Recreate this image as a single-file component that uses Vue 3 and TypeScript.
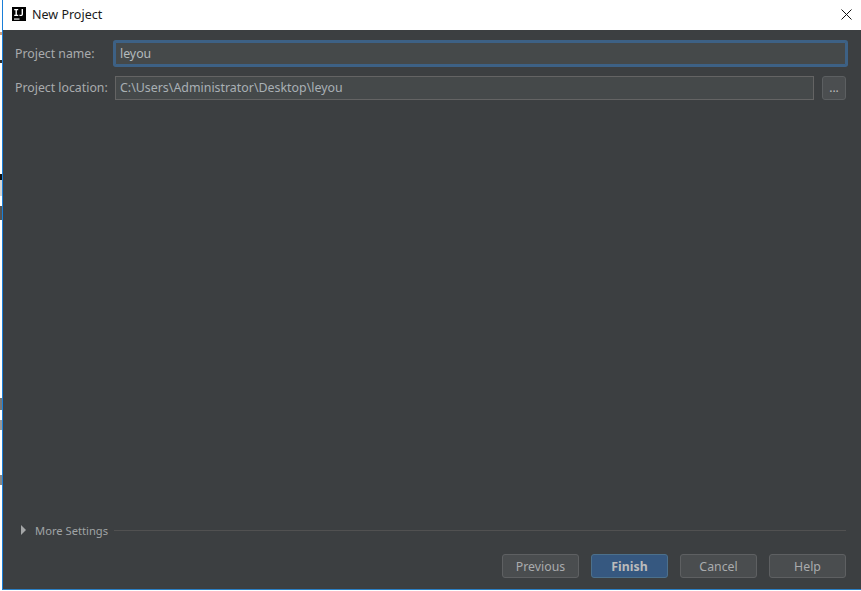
<script setup lang="ts">
const buttons: { label: string; primary?: boolean }[] = [
  { label: 'Previous' },
  { label: 'Finish', primary: true },
  { label: 'Cancel' },
  { label: 'Help' },
]
const backdrop: { top: number; height: number; color: string }[] = [
  { top: 32, height: 3, color: '#d0a080' },
  { top: 60, height: 3, color: '#30302e' },
  { top: 174, height: 6, color: '#111111' },
  { top: 180, height: 16, color: '#d6d6d6' },
  { top: 206, height: 14, color: '#555555' },
  { top: 398, height: 12, color: '#777777' },
  { top: 420, height: 10, color: '#999999' },
  { top: 475, height: 10, color: '#888888' },
]
</script>

<template>
  <div class="screen">
    <div class="backdrop">
      <i
        v-for="b in backdrop"
        :key="b.top"
        :style="{ top: b.top + 'px', height: b.height + 'px', background: b.color }"
      ></i>
    </div>
    <div class="window">
      <header class="titlebar">
        <svg class="logo" width="14" height="14" viewBox="0 0 14 14">
          <rect width="14" height="14" fill="#000" />
          <path d="M2.200 2h4v1.200H4.900v4.600h1.300V9h-4V7.800h1.300V3.200H2.200z" fill="#fff" />
          <path d="M9.600 2H11v5c0 1.400-.8 2.100-2.100 2.100-.7 0-1.300-.2-1.700-.6l.6-1c.3.300.7.400 1 .4.500 0 .8-.3.800-1z" fill="#fff" />
          <rect x="2" y="11.500" width="5.500" height="1.100" fill="#fff" />
        </svg>
        <span class="title">New Project</span>
        <svg class="close" width="11" height="11" viewBox="0 0 11 11">
          <path d="M.5.500l10 10M10.500.500l-10 10" stroke="#111" stroke-width="1" fill="none" />
        </svg>
      </header>
      <main class="body">
        <div class="form">
          <div class="row">
            <label class="label">Project name:</label>
            <div class="input focused">leyou</div>
          </div>
          <div class="row">
            <label class="label location">Project location:</label>
            <div class="input location-input">C:\Users\Administrator\Desktop\leyou</div>
            <button class="browse">...</button>
          </div>
        </div>
        <div class="more">
          <svg class="arrow" width="5" height="10" viewBox="0 0 5 10">
            <path d="M0 0l5 5-5 5z" fill="#a4a6a7" />
          </svg>
          <span class="more-text">More Settings</span>
          <span class="rule"></span>
        </div>
        <footer class="actions">
          <button
            v-for="b in buttons"
            :key="b.label"
            class="btn"
            :class="{ primary: b.primary }"
          >{{ b.label }}</button>
        </footer>
      </main>
    </div>
  </div>
</template>

<style scoped>
.screen {
  position: relative;
  width: 861px;
  height: 591px;
  background: #fff;
  overflow: hidden;
  font-family: "Noto Sans", "Open Sans", sans-serif;
  font-size: 12.300px;
  display: flex;
  flex-direction: column;
  padding-left: 2px;
  box-sizing: border-box;
}
.backdrop {
  position: absolute;
  left: 0;
  top: 0;
  width: 2px;
  height: 100%;
}
.backdrop i {
  position: absolute;
  left: 0;
  width: 2px;
}
.window {
  height: 590px;
  box-sizing: border-box;
  border-left: 1px solid #1a7fd8;
  border-bottom: 1px solid #2a7fc4;
  display: flex;
  flex-direction: column;
}
.titlebar {
  height: 30px;
  flex: none;
  box-sizing: border-box;
  background: #fff;
  display: flex;
  align-items: center;
  padding: 0 9px 2px 9px;
}
.logo {
  flex: none;
}
.title {
  margin-left: 6px;
  color: #1a1a1a;
  font-size: 12.500px;
}
.close {
  margin-left: auto;
}
.body {
  flex: 1;
  min-height: 0;
  background: #3c3f41;
  display: flex;
  flex-direction: column;
  padding: 11px 15px 11px 12px;
}
.form {
  display: flex;
  flex-direction: column;
  gap: 11px;
}
.row {
  display: flex;
  align-items: center;
  height: 24px;
}
.label {
  width: 100px;
  flex: none;
  color: #a9abad;
}
.location {
  padding-bottom: 1px;
}
.input {
  flex: 1;
  height: 24px;
  box-sizing: border-box;
  display: flex;
  align-items: center;
  padding: 0 4px;
  background: #45494a;
  border: 1px solid #646464;
  color: #a9b0b5;
}
.location-input {
  padding-bottom: 2px;
  font-size: 12.400px;
}
.focused {
  color: #b4babd;
  height: 23px;
  margin-top: 1px;
  border: 1px solid #3d6185;
  box-shadow: 0 0 0 2px #3d6185;
  border-radius: 1px;
}
.browse {
  width: 24px;
  height: 24px;
  margin-left: 8px;
  padding: 0 0 2px;
  box-sizing: border-box;
  background: #4b4e50;
  border: 1px solid #5c5f61;
  border-radius: 3px;
  color: #bbbbbb;
  font-family: inherit;
  font-size: 12px;
}
.more {
  margin-top: auto;
  display: flex;
  align-items: center;
  height: 18px;
  padding-left: 6px;
  margin-bottom: 2px;
}
.more-text {
  margin-left: 9px;
  color: #a0a4a6;
  font-size: 11.200px;
}
.rule {
  flex: 1;
  height: 1px;
  margin-left: 6px;
  background: #515151;
}
.actions {
  display: flex;
  justify-content: flex-end;
  gap: 12px;
  margin-top: 13px;
}
.btn {
  width: 77px;
  height: 24px;
  box-sizing: border-box;
  background: #4a4d4f;
  border: 1px solid #5e6062;
  border-radius: 3px;
  color: #a9abad;
  font-family: inherit;
  font-size: 12.300px;
  padding: 0;
}
.primary {
  background: #365880;
  border-color: #4c708c;
  color: #bbbbbb;
  font-weight: 700;
}
</style>
